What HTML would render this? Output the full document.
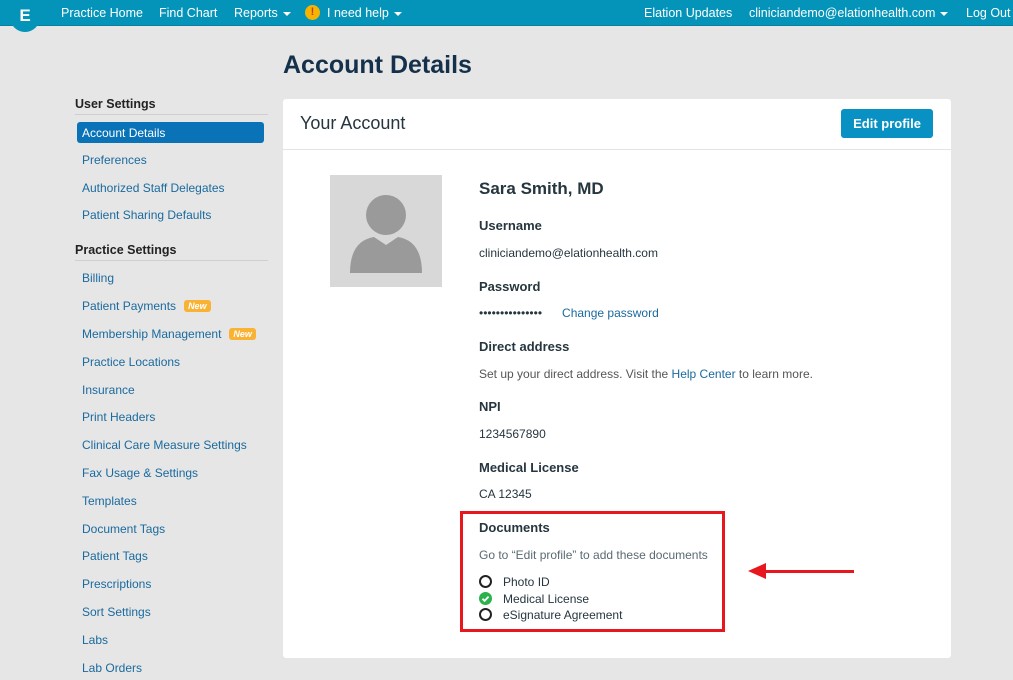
<!DOCTYPE html>
<html><head><meta charset="utf-8"><style>
*{box-sizing:border-box;margin:0;padding:0}
body{width:1013px;height:680px;overflow:hidden;background:#e6e6e6;font-family:"Liberation Sans","DejaVu Sans",sans-serif;position:relative;color:#26363f}
.top{position:absolute;left:0;top:0;width:1013px;height:26px;background:#0594b9;border-bottom:1px solid #0a7e9e;color:#fff;font-size:12.5px}
.top span{position:absolute;top:6px}
.logo{position:absolute;left:10px;top:-6px;width:30px;height:38px;border-radius:0 0 15px 15px;background:#0594b9;color:#fff;font-weight:bold;font-size:17px;text-align:center;padding-top:12px}
.caret{display:inline-block;border-left:4px solid transparent;border-right:4px solid transparent;border-top:4px solid #fff;margin-left:5px;vertical-align:middle}
h1{position:absolute;left:283px;top:51px;font-size:25px;color:#14304a;font-weight:bold}
.side{position:absolute;left:75px;font-size:12px;color:#1a6a9e}
.sh{position:absolute;left:75px;width:193px;font-size:12.5px;font-weight:bold;color:#222;border-bottom:1px solid #cfcfcf;padding-bottom:3px}
.new{display:inline-block;background:#f9b233;color:#fff;font-size:9px;font-style:italic;font-weight:bold;padding:1px 4px;border-radius:3px;margin-left:8px;vertical-align:1px}
.card{position:absolute;left:283px;top:99px;width:668px;height:559px;background:#fff;border-radius:3px}
.ch{height:51px;border-bottom:1px solid #e3e3e3;padding:14px 17px;font-size:18px;color:#26363f}
.btn{position:absolute;right:18px;top:10px;background:#0a91c4;color:#fff;font-size:13px;font-weight:bold;padding:7px 12px;border-radius:3px}
.av{position:absolute;left:47px;top:76px;width:112px;height:112px;background:#d8d8d8}
.t{position:absolute;left:196px;font-size:12px;color:#26363f}
.b{font-weight:bold;font-size:13px}
.a{color:#1a6a9e}
.box{position:absolute;left:460px;top:511px;width:265px;height:121px;border:3px solid #e8171d}
.c{display:inline-block;width:13px;height:13px;border:2px solid #222;border-radius:50%;vertical-align:-2px;margin-right:11px;position:relative}
</style></head><body>
<div class="top">
<div class="logo">E</div>
<span style="left:61px">Practice Home</span>
<span style="left:159px">Find Chart</span>
<span style="left:234px">Reports<i class="caret"></i></span>
<b style="position:absolute;left:305px;top:5px;width:15px;height:15px;border-radius:50%;background:#f5b400;color:#c33;font-size:11px;text-align:center;line-height:15px">!</b>
<span style="left:327px">I need help<i class="caret"></i></span>
<span style="left:644px">Elation Updates</span>
<span style="left:749px">cliniciandemo@elationhealth.com<i class="caret"></i></span>
<span style="left:966px">Log Out</span>
</div>
<h1>Account Details</h1>
<div class="sh" style="top:97px">User Settings</div>
<div style="position:absolute;left:77px;top:122px;width:187px;height:21px;background:#0a73b7;border-radius:3px;color:#fff;font-size:12px;padding:4px 5px">Account Details</div>
<div class="side" style="left:82px;top:153px">Preferences</div>
<div class="side" style="left:82px;top:181px">Authorized Staff Delegates</div>
<div class="side" style="left:82px;top:208px">Patient Sharing Defaults</div>
<div class="sh" style="top:243px">Practice Settings</div>
<div class="side" style="left:82px;top:271px">Billing</div>
<div class="side" style="left:82px;top:299px">Patient Payments<span class="new">New</span></div>
<div class="side" style="left:82px;top:327px">Membership Management<span class="new">New</span></div>
<div class="side" style="left:82px;top:355px">Practice Locations</div>
<div class="side" style="left:82px;top:383px">Insurance</div>
<div class="side" style="left:82px;top:410px">Print Headers</div>
<div class="side" style="left:82px;top:438px">Clinical Care Measure Settings</div>
<div class="side" style="left:82px;top:466px">Fax Usage &amp; Settings</div>
<div class="side" style="left:82px;top:494px">Templates</div>
<div class="side" style="left:82px;top:522px">Document Tags</div>
<div class="side" style="left:82px;top:549px">Patient Tags</div>
<div class="side" style="left:82px;top:577px">Prescriptions</div>
<div class="side" style="left:82px;top:605px">Sort Settings</div>
<div class="side" style="left:82px;top:633px">Labs</div>
<div class="side" style="left:82px;top:661px">Lab Orders</div>
<div class="card">
<div class="ch">Your Account</div>
<div class="btn">Edit profile</div>
<div class="av"><svg width="112" height="112"><circle cx="56" cy="40" r="20" fill="#9a9a9a"/><path d="M20 98 Q20 66 44 62 L56 70 L68 62 Q92 66 92 98 Z" fill="#9a9a9a"/></svg></div>
<div class="t" style="top:80px;font-size:17px;font-weight:bold">Sara Smith, MD</div>
<div class="t b" style="top:119px">Username</div>
<div class="t" style="top:147px">cliniciandemo@elationhealth.com</div>
<div class="t b" style="top:180px">Password</div>
<div class="t" style="top:207px">•••••••••••••••<span class="a" style="margin-left:20px">Change password</span></div>
<div class="t b" style="top:240px">Direct address</div>
<div class="t" style="top:268px;color:#555">Set up your direct address. Visit the <span class="a">Help Center</span> to learn more.</div>
<div class="t b" style="top:300px">NPI</div>
<div class="t" style="top:328px">1234567890</div>
<div class="t b" style="top:361px">Medical License</div>
<div class="t" style="top:388px">CA 12345</div>
<div class="t b" style="top:421px">Documents</div>
<div class="t" style="top:449px;color:#5a6a72">Go to “Edit profile” to add these documents</div>
<div class="t" style="top:475px;line-height:16.5px"><div><i class="c"></i>Photo ID</div><div><i class="c" style="background:#2bb24c;border-color:#2bb24c"><svg width="13" height="13" style="position:absolute;left:-2px;top:-2px"><path d="M3.5 6.8 L5.6 8.8 L9.6 4.6" stroke="#fff" stroke-width="1.8" fill="none"/></svg></i>Medical License</div><div><i class="c"></i>eSignature Agreement</div></div>
</div>
<div class="box"></div>
<div style="position:absolute;left:765px;top:570px;width:89px;height:3px;background:#e8171d"></div>
<div style="position:absolute;left:748px;top:563px;border-top:8px solid transparent;border-bottom:8px solid transparent;border-right:18px solid #e8171d"></div>
</body></html>
